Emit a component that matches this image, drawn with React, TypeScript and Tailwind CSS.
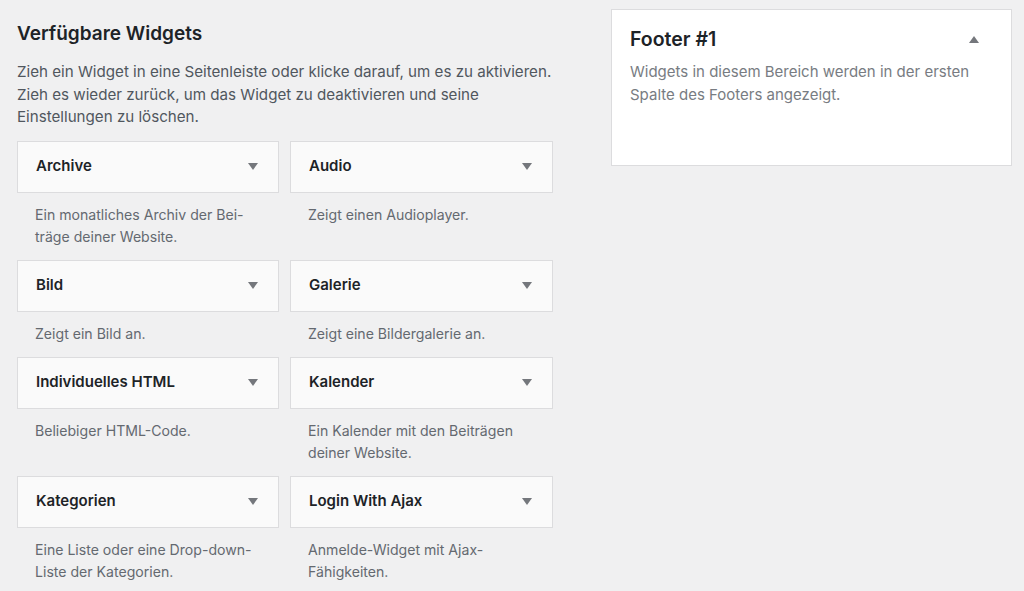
import React from "react";

type W = { title: string; desc: string };

const widgets: W[] = [
  { title: "Archive", desc: "Ein monatliches Archiv der Bei-\nträge deiner Website." },
  { title: "Audio", desc: "Zeigt einen Audioplayer." },
  { title: "Bild", desc: "Zeigt ein Bild an." },
  { title: "Galerie", desc: "Zeigt eine Bildergalerie an." },
  { title: "Individuelles HTML", desc: "Beliebiger HTML-Code." },
  { title: "Kalender", desc: "Ein Kalender mit den Beiträgen\ndeiner Website." },
  { title: "Kategorien", desc: "Eine Liste oder eine Drop-down-\nListe der Kategorien." },
  { title: "Login With Ajax", desc: "Anmelde-Widget mit Ajax-\nFähigkeiten." },
];

function Down() {
  return (
    <svg width="10" height="7" viewBox="0 0 10 7" className="shrink-0">
      <path d="M0 0 H10 L5 7 Z" fill="#74777c" />
    </svg>
  );
}

function Up() {
  return (
    <svg width="10" height="7" viewBox="0 0 10 7" className="shrink-0">
      <path d="M0 7 H10 L5 0 Z" fill="#74777c" />
    </svg>
  );
}

function Widget({ w }: { w: W }) {
  return (
    <div>
      <div className="h-[52px] bg-[#fafafa] border border-[#dcdcde] flex items-center justify-between pl-[18px] pr-[20px]">
        <span className="text-[15px] font-semibold text-[#1d2327]">{w.title}</span>
        <Down />
      </div>
      <div className="pl-[18px] pt-[11px] pb-[12px] text-[14.1px] leading-[22px] text-[#646970] whitespace-pre-line">
        {w.desc}
      </div>
    </div>
  );
}

export default function App() {
  return (
    <div
      className="w-[1024px] h-[591px] bg-[#f0f0f1] overflow-hidden flex"
      style={{ fontFamily: "Inter, 'Noto Sans', sans-serif" }}
    >
      <div className="w-[553px] ml-[17px] pt-[21px]">
        <h2 className="text-[19px] font-semibold text-[#1d2327] leading-[26px]">Verfügbare Widgets</h2>
        <p className="mt-[14px] text-[15.15px] leading-[22.5px] text-[#50575e] whitespace-nowrap">
          Zieh ein Widget in eine Seitenleiste oder klicke darauf, um es zu aktivieren.
          <br />
          Zieh es wieder zurück, um das Widget zu deaktivieren und seine
          <br />
          Einstellungen zu löschen.
        </p>
        <div className="mt-[12px] grid grid-cols-[262px_263px] gap-x-[11px]">
          {widgets.map((w) => (
            <Widget key={w.title} w={w} />
          ))}
        </div>
      </div>
      <div className="ml-[41px] mt-[9px] w-[401px] h-[157px] bg-white border border-[#dcdcde] px-[18px] pt-[16px] self-start">
        <div className="flex items-center justify-between pr-[14px]">
          <h3 className="text-[19.5px] font-semibold text-[#1d2327] leading-[26px]">Footer #1</h3>
          <Up />
        </div>
        <p className="mt-[8px] text-[15px] leading-[23px] text-[#787c82]">
          Widgets in diesem Bereich werden in der ersten
          <br />
          Spalte des Footers angezeigt.
        </p>
      </div>
    </div>
  );
}
